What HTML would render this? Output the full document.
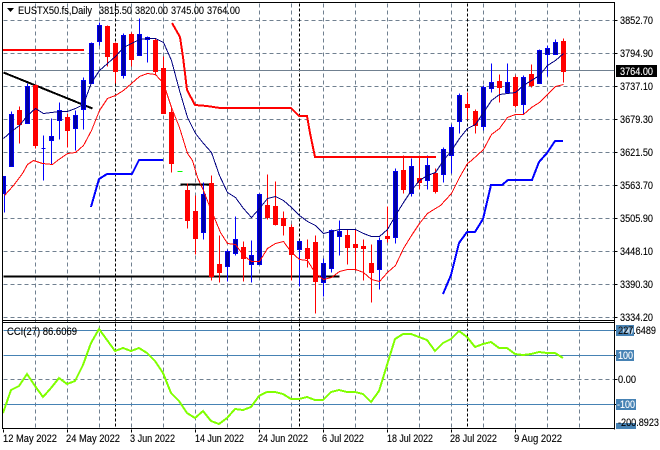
<!DOCTYPE html>
<html><head><meta charset="utf-8"><title>EUSTX50</title>
<style>
html,body{margin:0;padding:0;background:#fff;width:660px;height:450px;overflow:hidden}
svg{display:block}
text{font-family:"Liberation Sans",sans-serif;font-size:11px;fill:#000;stroke:#000;stroke-width:.12px}
text.w{fill:#fff;stroke:#fff}
</style></head><body>
<svg xmlns="http://www.w3.org/2000/svg" width="660" height="450" viewBox="0 0 660 450">
<rect width="660" height="450" fill="#fff"/>
<g transform="translate(.5,.5)" fill="none" shape-rendering="crispEdges">
<!-- grid -->
<path stroke="#708090" stroke-dasharray="4 3" d="M3 20H614M3 53H614M3 86H614M3 119H614M3 152H614M3 185H614M3 218H614M3 251H614M3 284H614M3 317H614M3 379H614"/>
<path stroke="#708090" stroke-dasharray="4 3" d="M35 3V428M67 3V428M99 3V428M131 3V428M163 3V428M195 3V428M227 3V428M259 3V428M291 3V428M323 3V428M355 3V428M387 3V428M419 3V428M451 3V428M483 3V428M515 3V428M547 3V428M579 3V428"/>
<path stroke="#000" stroke-dasharray="3 2" d="M115 3V428M299 3V428M467 3V428"/>
<path stroke="#708090" d="M3 70H614"/>
<path stroke="#4682b4" d="M3 330H614M3 355H614M3 404H614"/>
<!-- objects -->
<path stroke="#000" stroke-width="2" d="M3 72L92 108"/>
<path stroke="#000" stroke-width="2" d="M3 276H339M180 184H210"/>
<!-- wicks -->
<path stroke="#0000ff" d="M4 176V212M11 111V166M27 83V123M43 135V180M51 118V164M59 102V139M75 110V150M83 77V129M91 42V83M99 22V45M123 33V78M139 18V55M147 36V62M203 182V239M227 249V281M235 216V255M251 240V282M259 193V264M299 240V286M323 258V296M331 229V272M339 220V255M379 237V289M395 168V243M411 158V196M427 155V189M443 147V182M451 124V173M459 93V133M483 85V130M491 63V92M507 63V92M523 75V114M539 49V83M547 45V76M555 39V54"/>
<path stroke="#ff0000" d="M19 106V143M35 84V148M67 113V147M107 25V66M115 42V83M131 32V66M155 38V75M163 56V113M171 107V172M187 183V228M195 195V254M211 175V280M219 235V282M243 241V281M267 174V219M275 181V225M283 211V235M291 224V280M307 239V267M315 235V313M347 229V264M355 229V270M363 239V280M371 244V302M387 206V242M403 155V193M419 155V189M435 168V193M467 92V119M475 109V133M499 74V102M515 75V107M531 64V87M563 38V82"/>
<!-- bodies -->
<path fill="#0000a0" stroke="#0000f0" d="M3 176h2v17h-2zM9 114h4v52h-4zM25 86h4v37h-4zM41 148h4v0h-4zM49 136h4v4h-4zM57 110h4v10h-4zM73 115h4v13h-4zM81 80h4v29h-4zM89 43h4v40h-4zM97 25h4v16h-4zM121 35h4v40h-4zM137 34h4v21h-4zM145 37h4v2h-4zM201 194h4v38h-4zM225 251h4v15h-4zM233 239h4v14h-4zM249 255h4v9h-4zM257 194h4v70h-4zM297 241h4v8h-4zM321 263h4v19h-4zM329 230h4v38h-4zM337 231h4v5h-4zM377 240h4v29h-4zM393 171h4v66h-4zM409 166h4v27h-4zM425 165h4v15h-4zM441 149h4v25h-4zM449 127h4v28h-4zM457 95h4v26h-4zM481 87h4v39h-4zM489 82h4v6h-4zM505 82h4v10h-4zM521 77h4v27h-4zM537 50h4v33h-4zM545 48h4v6h-4zM553 42h4v12h-4z"/>
<path fill="#ff0000" stroke="#ff0000" d="M17 110h4v14h-4zM33 85h4v60h-4zM65 117h4v13h-4zM105 26h4v30h-4zM113 43h4v28h-4zM129 34h4v25h-4zM153 40h4v31h-4zM161 68h4v45h-4zM169 112h4v51h-4zM185 190h4v30h-4zM193 211h4v27h-4zM209 183h4v93h-4zM217 264h4v8h-4zM241 247h4v11h-4zM265 205h4v12h-4zM273 206h4v18h-4zM281 218h4v7h-4zM289 227h4v27h-4zM305 248h4v10h-4zM313 242h4v39h-4zM345 235h4v12h-4zM353 244h4v3h-4zM361 246h4v2h-4zM369 263h4v9h-4zM385 236h4v2h-4zM401 170h4v19h-4zM417 178h4v4h-4zM433 173h4v18h-4zM465 104h4v3h-4zM473 111h4v14h-4zM497 81h4v6h-4zM513 77h4v28h-4zM529 74h4v11h-4zM561 41h4v30h-4z"/>
<path stroke="#00ff00" d="M177 171H182"/>
<!-- navy MA -->
<path stroke="#000080" stroke-width="1" d="M3 138L11 131L19 125L27 115L35 108L43 113L51 112L59 111L67 111L75 108L83 104L91 82L99 70L107 63L115 56L123 47L131 43L139 39L147 38L155 38L163 42L171 60L179 90L187 117L195 133L203 143L211 152L219 175L227 192L235 197L243 208L251 217L259 208L267 198L275 196L283 200L291 207L299 215L307 221L315 225L323 233L331 231L339 229L355 229L363 233L371 236L379 236L387 229L395 215L403 202L411 190L419 180L427 175L435 172L443 160L451 150L459 138L467 128L475 124L483 112L491 100L499 94L507 93L515 92L523 85L531 80L539 75L547 65L555 60L563 53"/>
<!-- red MA -->
<path stroke="#ff0000" stroke-width="1" d="M4 195L13 185L22 173L27 164L33 160L42 163L52 164L57 160L67 153L75 152L83 145L91 130L99 110L107 98L115 95L123 90L131 83L139 76L147 73L155 74L163 83L171 107L179 127L187 153L192 160L197 177L203 190L208 203L215 220L220 232L227 243L235 244L243 255L251 261L259 261L267 248L275 243L283 241L291 252L299 259L307 260L315 273L323 279L331 277L339 271L347 269L355 269L363 272L371 279L379 281L387 272L395 265L403 248L411 235L419 223L427 213L435 208L440 205L451 193L459 177L467 163L471 160L483 149L491 134L499 128L507 117L515 114L523 114L531 107L539 102L547 94L555 86L563 84"/>
</g>
<g fill="none" shape-rendering="crispEdges">
<!-- thick red -->
<path stroke="#ff0000" stroke-width="2" d="M3 50H84M172 23L180 37L183 57L187 90L195 105L207 106L220 108H291L295 112L299 116H307L310 133L315 157H436"/>
<!-- thick blue -->
<path stroke="#0000ff" stroke-width="2" d="M91 207L99 179L107 174H132L139 160H163M443 294L451 275L459 243L467 232H475L483 219L491 185H502L508 180H532L539 162L547 153L555 141H563"/>
<!-- CCI -->
<path stroke="#80ff00" stroke-width="2" d="M3 413L11 390L19 386L27 374L35 386L43 397L51 388L59 378L67 384L75 381L83 365L91 343L99 329L107 340L115 351L123 348L131 351L139 348L147 353L155 361L163 373L171 393L179 401L187 413L195 418L203 411L211 421L219 424L227 418L235 409L243 410L251 407L259 396L267 392L275 392L283 394L291 399L299 399L307 397L315 400L323 400L331 392L339 390L347 392L355 392L363 394L371 402L379 391L387 365L395 339L403 334L411 334L419 337L427 340L435 351L443 343L451 339L459 331L467 337L475 347L483 344L491 342L499 348L507 348L515 354L523 355L531 354L539 352L547 353L555 353L563 358"/>
</g>
<g shape-rendering="crispEdges">
<!-- frames -->
<path fill="none" stroke="#000" transform="translate(.5,.5)" d="M2 2H614V429M2 2V428H614M2 320H614M2 322H614M614 20h3M614 53h3M614 86h3M614 119h3M614 152h3M614 185h3M614 218h3M614 251h3M614 284h3M614 317h3M614 330h3M614 355h3M614 379h3M614 404h3M3 429v3M67 429v3M131 429v3M195 429v3M259 429v3M323 429v3M387 429v3M451 429v3M515 429v3"/>
<rect x="616" y="65" width="41" height="12" fill="#000"/>
<rect x="616" y="325" width="18" height="11" fill="#4682b4"/>
<rect x="616" y="350" width="18" height="11" fill="#4682b4"/>
<rect x="616" y="399" width="20" height="11" fill="#4682b4"/>
<rect x="616" y="423" width="20" height="6" fill="#4682b4"/>
</g>
<path d="M7 8H14L10.5 12Z" fill="#000"/>
<text x="18" y="14" textLength="74" lengthAdjust="spacingAndGlyphs">EUSTX50.fs,Daily</text>
<text x="99" y="14" textLength="33" lengthAdjust="spacingAndGlyphs">3815.50</text>
<text x="135" y="14" textLength="33" lengthAdjust="spacingAndGlyphs">3820.00</text>
<text x="171" y="14" textLength="33" lengthAdjust="spacingAndGlyphs">3745.00</text>
<text x="207" y="14" textLength="33" lengthAdjust="spacingAndGlyphs">3764.00</text>
<text x="620" y="24" textLength="33" lengthAdjust="spacingAndGlyphs">3852.70</text>
<text x="620" y="57" textLength="33" lengthAdjust="spacingAndGlyphs">3794.90</text>
<text class="w" x="620" y="75" textLength="33" lengthAdjust="spacingAndGlyphs">3764.00</text>
<text x="620" y="90" textLength="33" lengthAdjust="spacingAndGlyphs">3737.10</text>
<text x="620" y="123" textLength="33" lengthAdjust="spacingAndGlyphs">3679.30</text>
<text x="620" y="156" textLength="33" lengthAdjust="spacingAndGlyphs">3621.50</text>
<text x="620" y="189" textLength="33" lengthAdjust="spacingAndGlyphs">3563.70</text>
<text x="620" y="222" textLength="33" lengthAdjust="spacingAndGlyphs">3505.90</text>
<text x="620" y="255" textLength="33" lengthAdjust="spacingAndGlyphs">3448.10</text>
<text x="620" y="288" textLength="33" lengthAdjust="spacingAndGlyphs">3390.30</text>
<text x="620" y="321" textLength="33" lengthAdjust="spacingAndGlyphs">3334.20</text>
<text x="7" y="335" textLength="70" lengthAdjust="spacingAndGlyphs">CCI(27) 86.6069</text>
<text class="w" x="618" y="334" textLength="15" lengthAdjust="spacingAndGlyphs">200</text>
<text x="618" y="334" textLength="38" lengthAdjust="spacingAndGlyphs">227.6489</text>
<text class="w" x="618" y="359" textLength="15" lengthAdjust="spacingAndGlyphs">100</text>
<text x="618" y="383" textLength="18" lengthAdjust="spacingAndGlyphs">0.00</text>
<text class="w" x="617" y="408" textLength="18" lengthAdjust="spacingAndGlyphs">-100</text>
<text x="618" y="426" textLength="41" lengthAdjust="spacingAndGlyphs">-200.8923</text>
<text x="3" y="442" textLength="54" lengthAdjust="spacingAndGlyphs">12 May 2022</text>
<text x="66" y="442" textLength="54" lengthAdjust="spacingAndGlyphs">24 May 2022</text>
<text x="130" y="442" textLength="45" lengthAdjust="spacingAndGlyphs">3 Jun 2022</text>
<text x="195" y="442" textLength="49" lengthAdjust="spacingAndGlyphs">14 Jun 2022</text>
<text x="258" y="442" textLength="50" lengthAdjust="spacingAndGlyphs">24 Jun 2022</text>
<text x="322" y="442" textLength="42" lengthAdjust="spacingAndGlyphs">6 Jul 2022</text>
<text x="387" y="442" textLength="46" lengthAdjust="spacingAndGlyphs">18 Jul 2022</text>
<text x="450" y="442" textLength="47" lengthAdjust="spacingAndGlyphs">28 Jul 2022</text>
<text x="514" y="442" textLength="48" lengthAdjust="spacingAndGlyphs">9 Aug 2022</text>
</svg>
</body></html>
